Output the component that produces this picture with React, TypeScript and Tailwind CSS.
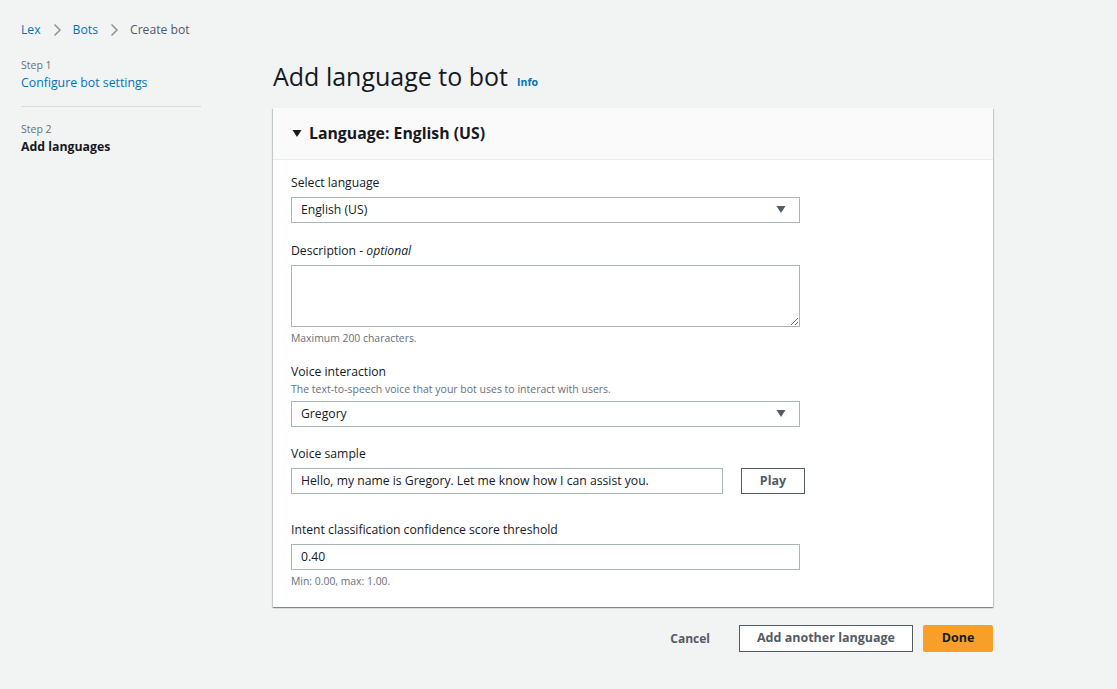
import React from 'react';

const font = { fontFamily: '"Open Sans", "Noto Sans", Arial, sans-serif' };

function Chevron() {
  return (
    <svg width="16" height="16" viewBox="0 0 16 16" className="text-[#879596]">
      <path d="M5.5 2.5 L11 8 L5.5 13.5" fill="none" stroke="currentColor" strokeWidth="1.5" />
    </svg>
  );
}

function Caret() {
  return (
    <svg width="12" height="10" viewBox="0 0 12 10" className="text-[#545b64]">
      <path d="M1.5 1 H10.5 L6 8 Z" fill="currentColor" />
    </svg>
  );
}

function Field({ label, hint, children, footer }: { label: React.ReactNode; hint?: string; children: React.ReactNode; footer?: string }) {
  return (
    <div className="flex flex-col">
      <div className="text-[12.2px] leading-[20px] text-[#16191f]">{label}</div>
      {hint && <div className="text-[10.5px] leading-[14px] text-[#687078]">{hint}</div>}
      <div className={hint ? 'mt-[5px]' : 'mt-[4px]'}>{children}</div>
      {footer && <div className="mt-[4px] text-[10.4px] leading-[14px] text-[#687078]">{footer}</div>}
    </div>
  );
}

function Select({ value }: { value: string }) {
  return (
    <div className="w-[509px] h-[26px] border border-[#aab7b8] bg-white flex items-center justify-between pl-[9px] pr-[12px] text-[12.2px] text-[#16191f]">
      <span>{value}</span>
      <Caret />
    </div>
  );
}

export default function App() {
  return (
    <div style={font} className="min-h-screen w-full bg-[#f2f3f3] text-[#16191f] flex">
      <aside className="w-[273px] shrink-0 pl-[21px] pt-[20px]">
        <nav className="flex items-center gap-[8px] text-[12.2px] leading-[20px]">
          <span className="text-[#0073bb]">Lex</span>
          <Chevron />
          <span className="text-[#0073bb]">Bots</span>
          <Chevron />
          <span className="text-[#545b64]">Create bot</span>
        </nav>
        <div className="w-[180px] mt-[18px]">
          <div className="text-[10.5px] leading-[14px] text-[#687078]">Step 1</div>
          <div className="text-[12.3px] leading-[20px] text-[#0073bb] mt-[1px]">Configure bot settings</div>
          <div className="h-px bg-[#d5dbdb] mt-[13px]" />
          <div className="text-[10.5px] leading-[14px] text-[#687078] mt-[15px]">Step 2</div>
          <div className="text-[12.3px] leading-[20px] font-bold text-[#16191f] mt-[1px]">Add languages</div>
        </div>
      </aside>

      <main className="w-[720px] pt-[60px]">
        <div className="flex items-baseline gap-[9px]">
          <h1 className="text-[25px] leading-[32px] text-[#16191f]">Add language to bot</h1>
          <span className="text-[10.5px] font-bold text-[#0073bb]">Info</span>
        </div>

        <section className="mt-[16px] bg-white shadow-[0_1px_1px_0_rgba(0,28,36,0.3),1px_1px_1px_0_rgba(0,28,36,0.15),-1px_1px_1px_0_rgba(0,28,36,0.15)]">
          <div className="h-[52px] bg-[#fafafa] border-b border-[#eaeded] flex items-center pl-[18px] gap-[6px]">
            <svg width="12" height="10" viewBox="0 0 12 10" className="text-[#16191f]">
              <path d="M1.5 1 H10.5 L6 8 Z" fill="currentColor" />
            </svg>
            <span className="text-[15.8px] font-bold text-[#16191f]">Language: English (US)</span>
          </div>
          <div className="pl-[18px] pt-[13px] pb-[19px] flex flex-col">
            <Field label="Select language">
              <Select value="English (US)" />
            </Field>
            <div className="mt-[18px]">
              <Field
                label={<>Description - <i>optional</i></>}
                footer="Maximum 200 characters."
              >
                <textarea className="w-[509px] h-[62px] border border-[#aab7b8] bg-white block resize-y" />
              </Field>
            </div>
            <div className="mt-[17px]">
              <Field label="Voice interaction" hint="The text-to-speech voice that your bot uses to interact with users.">
                <Select value="Gregory" />
              </Field>
            </div>
            <div className="mt-[17px]">
              <Field label="Voice sample">
                <div className="flex items-center gap-[18px]">
                  <div className="w-[432px] h-[26px] border border-[#aab7b8] bg-white flex items-center pl-[9px] text-[12.2px] text-[#16191f]">
                    Hello, my name is Gregory. Let me know how I can assist you.
                  </div>
                  <button className="w-[64px] h-[26px] border border-[#545b64] bg-white text-[12.5px] font-bold text-[#545b64]">Play</button>
                </div>
              </Field>
            </div>
            <div className="mt-[26px]">
              <Field label="Intent classification confidence score threshold" footer="Min: 0.00, max: 1.00.">
                <div className="w-[509px] h-[26px] border border-[#aab7b8] bg-white flex items-center pl-[9px] text-[12.2px] text-[#16191f]">0.40</div>
              </Field>
            </div>
          </div>
        </section>

        <div className="flex justify-end items-center mt-[18px] gap-[10px]">
          <button className="px-[19px] h-[27px] text-[12px] font-bold text-[#545b64]">Cancel</button>
          <button className="w-[174px] h-[27px] border border-[#545b64] bg-white text-[12.5px] font-bold text-[#545b64]">Add another language</button>
          <button className="w-[70px] h-[27px] bg-[#f89f2a] rounded-[2px] text-[12.5px] font-bold text-[#16191f]">Done</button>
        </div>
      </main>
    </div>
  );
}
